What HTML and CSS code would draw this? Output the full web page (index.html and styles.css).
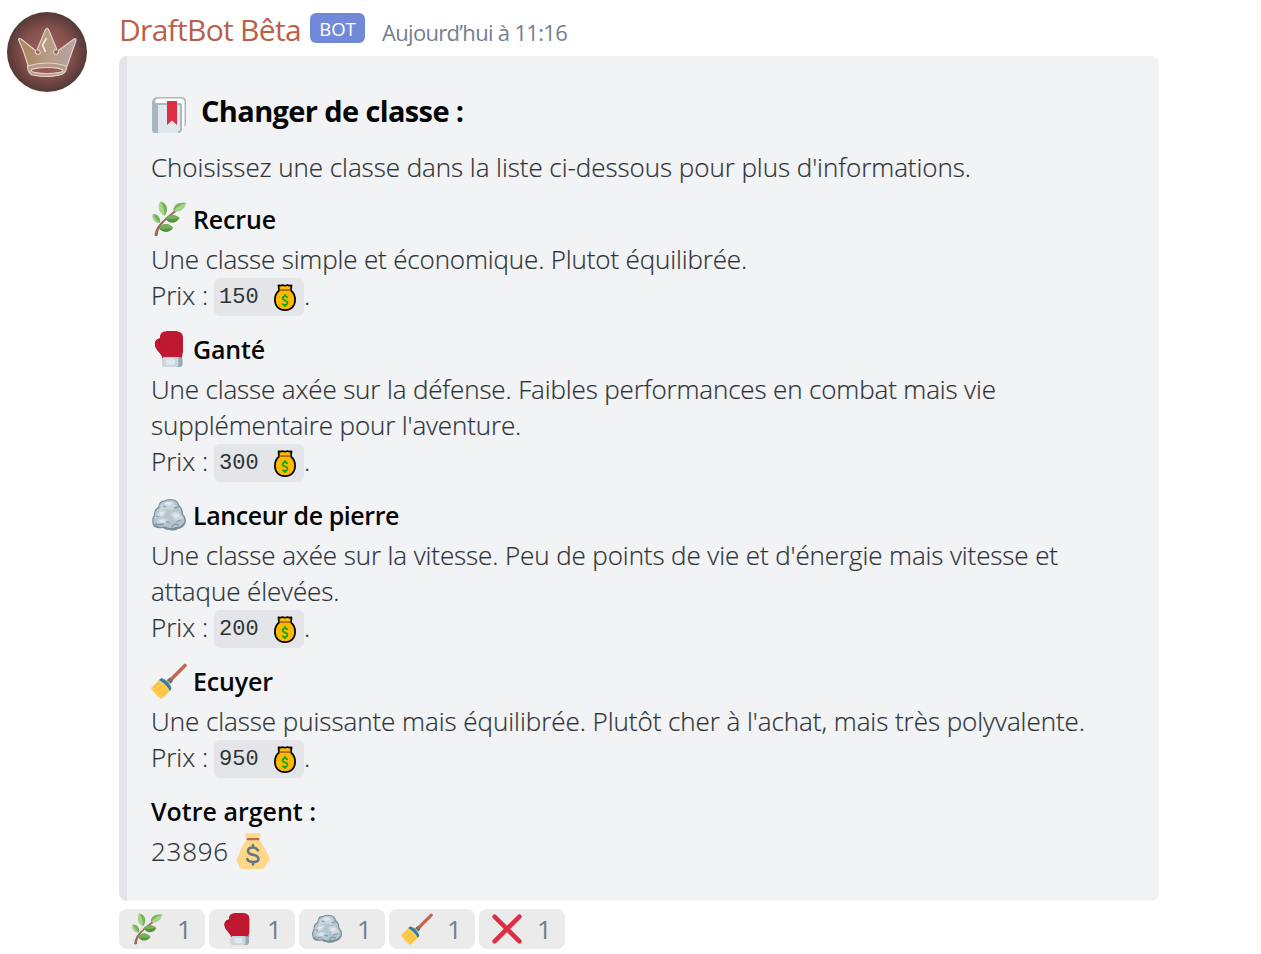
FILE: index.html
```html
<!DOCTYPE html>
<html lang="fr">
<head>
<meta charset="utf-8">
<title>DraftBot</title>
<link rel="stylesheet" href="styles.css">
</head>
<body>
<svg class="defs" width="0" height="0">
  <symbol id="herb" viewBox="0 0 36 36">
    <path d="M5 35C5.500 28 10 22 16 17S26 9 29 6" fill="none" stroke="#a0685c" stroke-width="1.800"/>
    <path d="M3.500 34.500C4 29 7 24 11 20.500L12.500 21.500C9 25 7 29 6.700 34.500Q5 36 3.500 34.500Z" fill="#a0685c"/>
    <path d="M13.500 15C7.500 12 6 5 9.500 .5C15 2 18 9 13.500 15Z" fill="#a6d388"/>
    <path d="M13.500 15C14 10 12 4 9.500 .5C16 2 18.500 9 13.500 15Z" fill="#77b255"/>
    <path d="M22.500 10C22 4 28 .5 35 2C34 8 29 12 22.500 10Z" fill="#a6d388"/>
    <path d="M22.500 10C22 4 28 .5 35 2Q27 4 22.500 10Z" fill="#77b255"/>
    <path d="M9 22C4 22 .5 18 2 13C7 13 10 17 9 22Z" fill="#77b255"/>
    <path d="M9 22C4 22 .5 18 2 13C4 17 6 20 9 22Z" fill="#a6d388"/>
    <path d="M14 17.500C18 12.500 24 13 28.500 17C25 23.500 18 23 14 17.500Z" fill="#5c913b"/>
    <path d="M14 17.500C18 12.500 24 13 28.500 17Q21 18.500 14 17.500Z" fill="#77b255"/>
    <path d="M8 27.500C11 21.500 18 21.500 22 27C18 32.500 12 32 8 27.500Z" fill="#5c913b"/>
    <path d="M8 27.500C11 21.500 18 21.500 22 27Q15 28 8 27.500Z" fill="#77b255"/>
  </symbol>
  <symbol id="glove" viewBox="0 0 36 36">
    <path d="M11 7C6 7 3.500 10 4 14C4.500 19 9 21 11.500 26H17V9Z" fill="#a0041e"/>
    <path d="M8 8C5 8.500 3.500 11 4 14C4.500 18 8 20 10 24C11.500 20 8 13 8 8Z" fill="#be1931"/>
    <path d="M9 6C9 2 12 0 18 0H23C29 0 32 2 32 7V19C32 23 31 24 31 27H11C11 22 8 17 9 6Z" fill="#be1931"/>
    <rect x="11" y="26" width="20.500" height="10" rx="3" fill="#9aaab4"/>
    <rect x="11" y="26" width="16.500" height="10" rx="3" fill="#ccd6dd"/>
    <rect x="15" y="28" width="9" height="6" rx="2" fill="#e1e8ed"/>
  </symbol>
  <symbol id="rock" viewBox="0 0 36 36">
    <path d="M8 7Q9 3.500 13 3.500Q17 1 23 2.500Q27 3.500 28 8Q32 11 32 17Q36 21 34.500 26Q33 31 27 32Q23 34.500 18 33Q14 33 12 31Q4 32 2 28Q0 22 3 18Q2 13 7 10Z" fill="#778b98"/>
    <path d="M8.500 8Q10 4.500 13.500 4.500Q17 2 22.500 3.500Q26.500 4.500 27 9Q31 12 30.500 17Q34.500 21 33 25.500Q30 30 25 30Q18 32 14 29.500Q7 31 3 27Q1.500 22 4 18.500Q3 14 8 11Z" fill="#b4c5cf"/>
    <path d="M10 8Q15 3 22 5L26 10L22 13L15 12L8 15Z M6 17Q10 12 16 14L12 20L4 21Z M19 17Q26 12 30 18L32 22L24 24Z M6 23Q12 19 18 23L13 28L6 28Z" fill="#cbd7df"/>
    <path d="M13 6.500Q18 4 22 6L18 9Z M8 16Q11 14 14 15L10 19Z M22 18Q26 15 29 19L24 21Z M8 24Q12 21 15 24L11 26Z" fill="#e1e8ed"/>
    <path d="M23 11L27 10M15 24.500L19 26M25 25L30 23M5 19L8 20M12 9L15 10M4 27Q9 28 13 27M20 30L24 27L28 28" stroke="#8499a7" stroke-width="1.300" fill="none"/>
  </symbol>
  <symbol id="broom" viewBox="0 0 36 36">
    <path d="M18.500 18L34 2.500" stroke="#c1694f" stroke-width="3.600" stroke-linecap="round"/>
    <path d="M15.500 17.500L18.500 14.500L22 18L19.500 21Z" fill="#66757f"/>
    <path d="M0 25L9 16Q13 15 17 18Q21 21.500 20 27L10.500 36Q4 32 0 25Z" fill="#ffcc4d"/>
    <path d="M3 25L8 20M5 28.500L11 22.500M8 31.500L14 25.500M11 33L16 28" stroke="#f4a52f" stroke-width=".8"/>
    <path d="M8 17L10.500 15Q17 17 20.500 25L19 28Q15 21 8 17Z" fill="#3b88c3"/>
    <path d="M10 16.500Q16 20 19.500 26.500" fill="none" stroke="#226699" stroke-width="1.300" stroke-dasharray="1.500 1"/>
  </symbol>
  <symbol id="cross" viewBox="0 0 36 36">
    <path d="M4 4L32 32M32 4L4 32" stroke="#dd2e44" stroke-width="5" stroke-linecap="round"/>
  </symbol>
  <symbol id="book" viewBox="0 0 36 36">
    <path d="M1 6Q1 0 7 0H30Q35 0 35 5V27Q35 29 33 30V36H5Q1 36 1 32Z" fill="#aab8c2"/>
    <path d="M31 31L33 30V36H28Q31 35 31 31Z" fill="#f2f3f5"/>
    <path d="M4 5Q4 1.500 8 1.500H30Q33.500 1.500 33.500 5V31L31 33V9Q31 6 29 6H6Q4 6 4 5Z" fill="#fff"/>
    <path d="M7 8H28Q30 8 30 10V33Q30 36 27 36H7Z" fill="#e1e8ed"/>
    <path d="M5 7H28Q30 7 30 10V32Q30 35 27 35.500" fill="none" stroke="#aab8c2" stroke-width="2"/>
    <path d="M1 6Q3 8 7 8V36H5Q1 36 1 32Z" fill="#a6b7c1"/>
    <path d="M16 4H26V28L21 23.500L16 28Z" fill="#dd2e44"/>
  </symbol>
  <symbol id="bag" viewBox="0 0 36 36">
    <path d="M10.500 1Q12.500-.8 14.500.8Q16.500-.8 18 .5Q20-.8 22 .8Q24-.8 25.500 1Q26 3 24.500 5H11.500Q9.500 3 10.500 1Z" fill="#fdd888"/>
    <path d="M12 6.500H24C27 11 30 15 32 20C36 25 34 29 31.500 31C31 34 29 36 26 36H9C5 36 3.500 34 3.500 31C1 28 1 25 4 22C5 16 9 11 12 6.500Z" fill="#fdd888"/>
    <rect x="11.500" y="5" width="13" height="2.200" rx="1" fill="#bf6952"/>
    <path d="M23 17.500Q21.500 14.500 17.800 14.500Q13 14.500 13 18Q13 21 18 21.800Q23.500 22.700 23.500 26Q23.500 29 18 29Q13.500 29 12.300 26M18 12V14.500M18 29V31.500" fill="none" stroke="#67757f" stroke-width="2.600" stroke-linecap="round"/>
  </symbol>
  <symbol id="coinbag" viewBox="0 0 22 27">
    <path d="M4.500 1.300L6.500 1.700L8.500 1L11 1.700L13.500 1L15.500 1.700L17.500 1.300L17 6.500C19.500 8.500 21.100 12 21.100 16C21.100 22 17 26.100 11 26.100S.9 22 .9 16C.9 12 2.500 8.500 5 6.500Z" fill="#ffb900" stroke="#000" stroke-width="1.700" stroke-linejoin="round"/>
    <path d="M5.500 5.300H16.500V6.800H5.500Z" fill="#9c5a1c"/>
    <path d="M13.600 14L12.500 12.500H9.800L8.700 13.500V15.200L13.300 17.800V19.600L12 20.800H9.500L8.300 19.500M11 10V12.500M11 20.800V23" fill="none" stroke="#16a316" stroke-width="1.700"/>
  </symbol>
  <radialGradient id="avatar-bg"><stop offset="0" stop-color="#a36265"/><stop offset=".6" stop-color="#87504f"/><stop offset="1" stop-color="#543936"/></radialGradient>
  <linearGradient id="crown-fill"><stop offset="0" stop-color="#a98258"/><stop offset=".5" stop-color="#b79b84"/><stop offset="1" stop-color="#b5a5a8"/></linearGradient>
</svg>

<main class="message">
  <svg class="avatar" viewBox="0 0 80 80">
    <circle cx="40" cy="40" r="40" fill="url(#avatar-bg)"/>
    <g stroke="#e0d3c8" stroke-width="1.200" stroke-linejoin="round">
      <path d="M22 57C19 46 15 35 11.500 27.500Q12 26 14 27L28.500 38.500Q28 42 31 42.500Q34 42 33 39Q32 37.500 30 38L38.500 17.500Q40 15 41.500 17.500L50 38Q47 37 46.500 40Q47 43 50 42Q52 41 51.500 38.500L67 27Q69.500 26 69 28.500L59 57Q58 64 40 64.500Q23 64 22 57Z" fill="url(#crown-fill)"/>
      <path d="M20.500 54Q40 48 59.500 54Q59.500 62 52 63Q38 65.500 25 63Q20.500 60 20.500 54Z" fill="#b79a83"/>
      <ellipse cx="40" cy="58.500" rx="16" ry="3" fill="#935a58"/>
    </g>
    <path d="M39.500 26L35.500 33L38.500 40" fill="none" stroke="#f5eee8" stroke-width="1.600"/>
  </svg>

  <div class="content">
    <header class="meta">
      <span class="author">DraftBot Bêta</span>
      <span class="tag">BOT</span>
      <time class="time">Aujourd’hui à 11:16</time>
    </header>

    <article class="embed">
      <h1 class="title"><svg class="icon"><use href="#book"/></svg><span>Changer de classe :</span></h1>
      <p class="line desc">Choisissez une classe dans la liste ci-dessous pour plus d'informations.</p>

      <section class="field recruit">
        <h2 class="name"><svg class="icon"><use href="#herb"/></svg><span>Recrue</span></h2>
        <p class="line text">Une classe simple et économique. Plutot équilibrée.</p>
        <p class="line price"><span class="label">Prix :</span><code class="code">150<svg class="coin"><use href="#coinbag"/></svg></code>.</p>
      </section>

      <section class="field gloved">
        <h2 class="name"><svg class="icon"><use href="#glove"/></svg><span>Ganté</span></h2>
        <p class="line text">Une classe axée sur la défense. Faibles performances en combat mais vie</p>
        <p class="line text">supplémentaire pour l'aventure.</p>
        <p class="line price"><span class="label">Prix :</span><code class="code">300<svg class="coin"><use href="#coinbag"/></svg></code>.</p>
      </section>

      <section class="field thrower">
        <h2 class="name"><svg class="icon"><use href="#rock"/></svg><span>Lanceur de pierre</span></h2>
        <p class="line text">Une classe axée sur la vitesse. Peu de points de vie et d'énergie mais vitesse et</p>
        <p class="line text">attaque élevées.</p>
        <p class="line price"><span class="label">Prix :</span><code class="code">200<svg class="coin"><use href="#coinbag"/></svg></code>.</p>
      </section>

      <section class="field squire">
        <h2 class="name"><svg class="icon"><use href="#broom"/></svg><span>Ecuyer</span></h2>
        <p class="line text">Une classe puissante mais équilibrée. Plutôt cher à l'achat, mais très polyvalente.</p>
        <p class="line price"><span class="label">Prix :</span><code class="code">950<svg class="coin"><use href="#coinbag"/></svg></code>.</p>
      </section>

      <section class="field wallet">
        <h2 class="name"><span>Votre argent :</span></h2>
        <p class="line money"><span class="amount">23896</span><svg class="icon"><use href="#bag"/></svg></p>
      </section>
    </article>

    <footer class="reactions">
      <span class="reaction"><svg><use href="#herb"/></svg>1</span>
      <span class="reaction"><svg><use href="#glove"/></svg>1</span>
      <span class="reaction"><svg><use href="#rock"/></svg>1</span>
      <span class="reaction"><svg><use href="#broom"/></svg>1</span>
      <span class="reaction"><svg><use href="#cross"/></svg>1</span>
    </footer>
  </div>
</main>
</body>
</html>
```
FILE: styles.css
```css
* { box-sizing: border-box; }
body { margin: 0; background: #fff; color: #2e3338; font-family: "Open Sans", sans-serif; overflow: hidden; }
h1, h2, p { margin: 0; }
.defs { position: absolute; }
.message { display: flex; gap: 32px; padding: 12px 0 0 7px; }
.avatar { width: 80px; height: 80px; flex: none; }
.content { width: 1040px; }
.meta { display: flex; height: 44px; white-space: nowrap; }
.author { width: 181px; color: #b9604a; font-size: 30px; line-height: 36px; letter-spacing: -.7px; }
.tag { display: flex; align-items: center; justify-content: center; width: 55px; height: 30px; margin: 1px 0 0 10px; border-radius: 6px; background: #7289da; color: #fff; font-size: 18.500px; font-weight: 500; }
.time { margin-left: 17px; color: #747f8d; font-size: 22px; line-height: 41px; letter-spacing: -.69px; }
.embed { height: 845px; padding: 36px 24px 0; border-left: 8px solid #e3e5e8; border-radius: 8px; background: #f2f3f5; }
.icon { display: block; width: 36px; height: 36px; flex: none; }
.title { display: flex; gap: 14px; height: 40px; color: #060607; font-size: 29px; font-weight: 700; line-height: 38px; letter-spacing: -.63px; white-space: nowrap; }
.title .icon { margin-top: 5px; }
.line { height: 36px; font-size: 26px; font-weight: 300; line-height: 34px; white-space: nowrap; -webkit-text-stroke: .2px #2e3338; }
.desc { margin-top: 18px; letter-spacing: -.055px; }
.field { margin-top: 16px; }
.field + .field { margin-top: 18px; }
.name { display: flex; gap: 6px; height: 36px; margin-bottom: 4px; color: #060607; font-size: 25px; font-weight: 600; line-height: 34px; letter-spacing: -.15px; white-space: nowrap; }
.name .icon { margin-top: -1px; }
.recruit .text { letter-spacing: -.152px; }
.gloved .text { letter-spacing: -.14px; }
.thrower .name { letter-spacing: -.432px; }
.thrower .text { letter-spacing: -.106px; }
.squire .text { letter-spacing: -.051px; }
.wallet .name { letter-spacing: 0; }
.price { display: flex; }
.label { width: 63px; }
.code { display: flex; align-items: center; width: 90px; height: 38px; padding: 1px 0 0 5px; border-radius: 6px; background: #e3e5e8; font: 400 22px "Liberation Mono", monospace; -webkit-text-stroke: 0; }
.coin { width: 22px; height: 27px; margin: -1px 0 0 15px; }
.money { display: flex; }
.amount { width: 84px; letter-spacing: .75px; }
.money .icon { margin-top: -1px; }
.reactions { display: flex; gap: 4px; margin-top: 8px; }
.reaction { display: flex; align-items: center; width: 86px; height: 40px; padding-left: 12px; border-radius: 8px; background: #ebebeb; color: #747f8d; font-size: 26px; font-weight: 500; }
.reaction svg { width: 32px; height: 32px; margin-right: 14px; }
```
